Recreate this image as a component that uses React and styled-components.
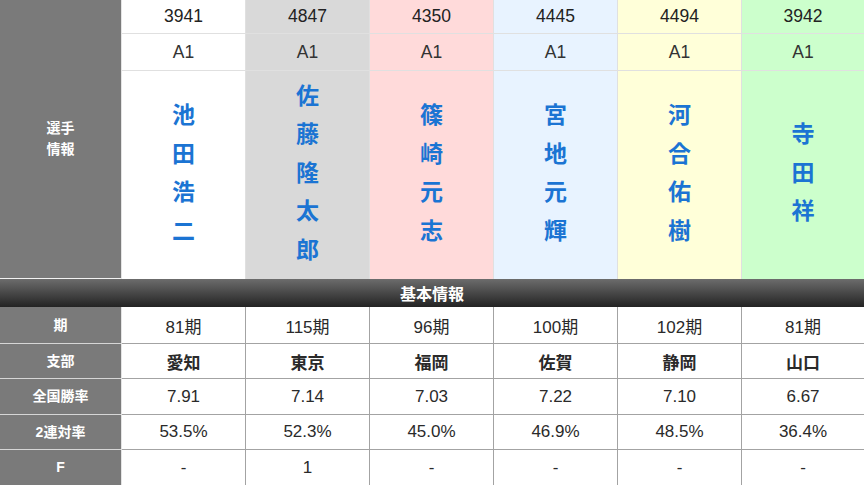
import React from "react"
import styled, { createGlobalStyle } from "styled-components"

const GlobalStyle = createGlobalStyle`
  html, body {
    margin: 0;
    padding: 0;
    overflow: hidden;
    background: #fff;
    font-family: "Liberation Sans", "Noto Sans CJK JP", sans-serif;
  }
`

const racers = [
  { no: "3941", rank: "A1", name: "池田浩二", bg: "#ffffff", term: "81期", branch: "愛知", rate: "7.91", ren: "53.5%", f: "-" },
  { no: "4847", rank: "A1", name: "佐藤隆太郎", bg: "#d9d9d9", term: "115期", branch: "東京", rate: "7.14", ren: "52.3%", f: "1" },
  { no: "4350", rank: "A1", name: "篠崎元志", bg: "#ffdada", term: "96期", branch: "福岡", rate: "7.03", ren: "45.0%", f: "-" },
  { no: "4445", rank: "A1", name: "宮地元輝", bg: "#e8f3ff", term: "100期", branch: "佐賀", rate: "7.22", ren: "46.9%", f: "-" },
  { no: "4494", rank: "A1", name: "河合佑樹", bg: "#ffffd9", term: "102期", branch: "静岡", rate: "7.10", ren: "48.5%", f: "-" },
  { no: "3942", rank: "A1", name: "寺田祥", bg: "#ccffcc", term: "81期", branch: "山口", rate: "6.67", ren: "36.4%", f: "-" },
]

const Page = styled.div`
  width: 864px;
`

const TopGrid = styled.div`
  display: grid;
  grid-template-columns: 122px repeat(5, 124px) 1fr;
  grid-template-rows: 34px 37px 208px;
`

const SideLabel = styled.div`
  grid-row: ${p => p.$span ? `span ${p.$span}` : "auto"};
  display: flex;
  align-items: center;
  justify-content: center;
  text-align: center;
  background: #7a7a7a;
  color: #fff;
  font-weight: bold;
  font-size: 14px;
  line-height: 21px;
  border-right: 1px solid #e4e4e4;
  border-bottom: 1px solid ${p => p.$light ? "#d6d6d6" : "#f2f2f2"};
`

const TopCell = styled.div`
  display: flex;
  align-items: center;
  justify-content: center;
  background: ${p => p.$bg};
  color: ${p => p.$color || "#222"};
  font-size: 17.5px;
  border-right: ${p => p.$last ? "none" : "1px solid #e0e0e0"};
  border-bottom: ${p => p.$noBottom ? "none" : "1px solid #e0e0e0"};
`

const NameCol = styled.div`
  display: flex;
  flex-direction: column;
  align-items: center;
  padding-bottom: 8px;
  color: #1b74d3;
  font-family: "Noto Sans CJK JP", sans-serif;
  font-weight: bold;
  font-size: 23px;
`

const NameChar = styled.span`
  display: block;
  line-height: 38.5px;
`

const Header = styled.div`
  height: 28px;
  display: flex;
  align-items: center;
  justify-content: center;
  background: linear-gradient(#6c6c6c, #232323);
  color: #fff;
  font-weight: bold;
  font-size: 16px;
`

const InfoGrid = styled.div`
  display: grid;
  grid-template-columns: 122px repeat(5, 124px) 1fr;
  grid-template-rows: 37px 35px 36px 35px 36px;
`

const DataCell = styled.div`
  display: flex;
  align-items: center;
  justify-content: center;
  background: #fff;
  color: #2a2a2a;
  font-size: 17px;
  font-weight: ${p => p.$bold ? "bold" : "normal"};
  border-right: ${p => p.$last ? "none" : "1px solid #a3a3a3"};
  border-bottom: 1px solid #a3a3a3;
`

const infoRows = [
  { label: "期", key: "term" },
  { label: "支部", key: "branch", bold: true },
  { label: "全国勝率", key: "rate" },
  { label: "2連対率", key: "ren" },
  { label: "F", key: "f" },
]

export default function App() {
  return (
    <Page>
      <GlobalStyle />
      <TopGrid>
        <SideLabel $span={3}>選手<br />情報</SideLabel>
        {racers.map((r, i) => (
          <TopCell key={"no" + i} $bg={r.bg} $last={i === 5}>{r.no}</TopCell>
        ))}
        {racers.map((r, i) => (
          <TopCell key={"rk" + i} $bg={r.bg} $last={i === 5} $color="#333">{r.rank}</TopCell>
        ))}
        {racers.map((r, i) => (
          <TopCell key={"nm" + i} $bg={r.bg} $last={i === 5} $noBottom>
            <NameCol>
              {r.name.split("").map((c, j) => <NameChar key={j}>{c}</NameChar>)}
            </NameCol>
          </TopCell>
        ))}
      </TopGrid>
      <Header>基本情報</Header>
      <InfoGrid>
        {infoRows.map(row => (
          <React.Fragment key={row.key}>
            <SideLabel $light>{row.label}</SideLabel>
            {racers.map((r, i) => (
              <DataCell key={i} $bold={row.bold} $last={i === 5}>{r[row.key]}</DataCell>
            ))}
          </React.Fragment>
        ))}
      </InfoGrid>
    </Page>
  )
}
